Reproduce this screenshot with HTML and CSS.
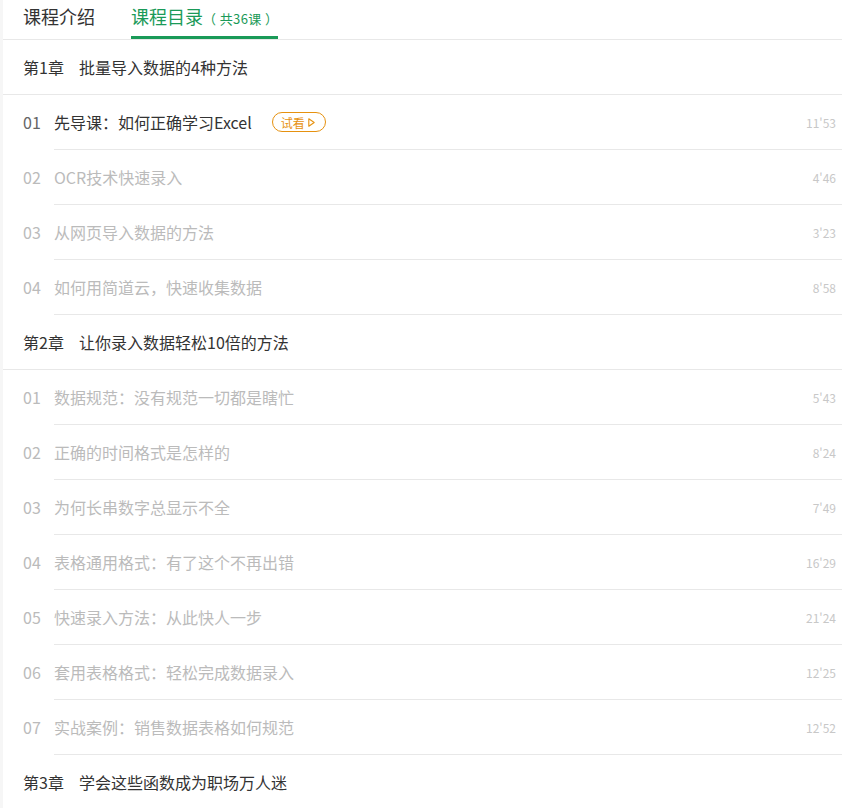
FILE: index.html
```html
<!DOCTYPE html>
<html lang="zh-CN">
  <head>
    <meta charset="UTF-8" />
    <meta name="viewport" content="width=device-width, initial-scale=1.0" />
    <title>课程目录</title>
    <link rel="stylesheet" href="styles.css">
  </head>

  <body>
    <div class="course">
      <div class="tabs">
        <div class="tab">课程介绍</div>
        <div class="tab active">课程目录<span class="count">（ 共36课 ）</span></div>
      </div>

      <ul class="catalog">
        <li class="chapter"><span class="chapter-no">第1章</span>批量导入数据的4种方法</li>
        <li class="lesson open">
          <span class="num">01</span>
          <div class="body">
            <span class="title">先导课：如何正确学习Excel</span>
            <span class="try">试看
              <svg width="7" height="9" viewBox="0 0 7 9"><path d="M0.8 0.8 L6.2 4.5 L0.8 8.2 Z" fill="none" stroke="currentColor" stroke-width="1.1" stroke-linejoin="round"/></svg>
            </span>
            <span class="time">11'53</span>
          </div>
        </li>
        <li class="lesson"><span class="num">02</span><div class="body"><span class="title">OCR技术快速录入</span><span class="time">4'46</span></div></li>
        <li class="lesson"><span class="num">03</span><div class="body"><span class="title">从网页导入数据的方法</span><span class="time">3'23</span></div></li>
        <li class="lesson"><span class="num">04</span><div class="body"><span class="title">如何用简道云，快速收集数据</span><span class="time">8'58</span></div></li>

        <li class="chapter"><span class="chapter-no">第2章</span>让你录入数据轻松10倍的方法</li>
        <li class="lesson"><span class="num">01</span><div class="body"><span class="title">数据规范：没有规范一切都是瞎忙</span><span class="time">5'43</span></div></li>
        <li class="lesson"><span class="num">02</span><div class="body"><span class="title">正确的时间格式是怎样的</span><span class="time">8'24</span></div></li>
        <li class="lesson"><span class="num">03</span><div class="body"><span class="title">为何长串数字总显示不全</span><span class="time">7'49</span></div></li>
        <li class="lesson"><span class="num">04</span><div class="body"><span class="title">表格通用格式：有了这个不再出错</span><span class="time">16'29</span></div></li>
        <li class="lesson"><span class="num">05</span><div class="body"><span class="title">快速录入方法：从此快人一步</span><span class="time">21'24</span></div></li>
        <li class="lesson"><span class="num">06</span><div class="body"><span class="title">套用表格格式：轻松完成数据录入</span><span class="time">12'25</span></div></li>
        <li class="lesson"><span class="num">07</span><div class="body"><span class="title">实战案例：销售数据表格如何规范</span><span class="time">12'52</span></div></li>

        <li class="chapter"><span class="chapter-no">第3章</span>学会这些函数成为职场万人迷</li>
      </ul>
    </div>
  </body>
</html>
```

FILE: styles.css
```css
body {
  margin: 0;
  background-color: #f6f6f6;
  font-family: "Noto Sans CJK SC", "Noto Sans", sans-serif;
}

.course {
  margin-left: 3px;
  background-color: #fff;
  min-height: 808px;
}

.tabs {
  display: flex;
  gap: 36px;
  padding-left: 20px;
  height: 39px;
  border-bottom: 1px solid #e8e8e8;
}

.tab {
  font-size: 18px;
  line-height: 33px;
  color: #333;
}

.tab.active {
  color: #1a9a58;
  border-bottom: 3px solid #1a9a58;
}

.count {
  font-size: 13px;
  letter-spacing: 0.4px;
}

.catalog {
  list-style-type: none;
  margin: 0;
  padding: 0;
}

.chapter {
  height: 54px;
  line-height: 54px;
  padding-left: 20px;
  border-bottom: 1px solid #e8e8e8;
  font-size: 16px;
  color: #333;
}

.chapter-no {
  display: inline-block;
  width: 56px;
}

.lesson {
  display: flex;
  padding-left: 20px;
  font-size: 16px;
  color: #bbb;
}

.num {
  width: 31px;
  line-height: 54px;
}

.body {
  flex: 1;
  display: flex;
  align-items: center;
  height: 54px;
  padding-right: 6px;
  border-bottom: 1px solid #e8e8e8;
}

.open .num {
  color: #666;
}

.open .title {
  color: #333;
}

.try {
  display: flex;
  align-items: center;
  gap: 3px;
  margin-left: 20px;
  height: 18px;
  padding: 0 10px 0 8px;
  border: 1px solid #e6910f;
  border-radius: 10px;
  color: #e6910f;
  font-size: 12px;
}

.time {
  margin-left: auto;
  font-size: 12px;
  color: #c8c8c8;
}
```
